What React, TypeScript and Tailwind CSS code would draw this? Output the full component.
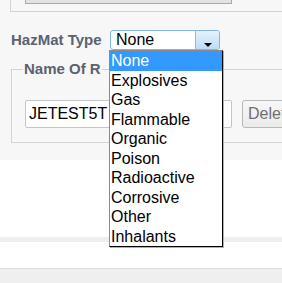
const hazmatTypes = [
  "None",
  "Explosives",
  "Gas",
  "Flammable",
  "Organic",
  "Poison",
  "Radioactive",
  "Corrosive",
  "Other",
  "Inhalants",
];

export default function App() {
  return (
    <div className="relative w-[282px] h-[283px] overflow-hidden bg-white font-['Liberation_Sans',Arial,sans-serif]">
      {/* Upper panel */}
      <div className="h-[160px] bg-[#f7f7f7]">
        <div className="ml-[10px] h-[12px] border-l border-b border-[#d3d3d3]">
          <div className="ml-[14px] w-[207px] h-[4px] bg-[#e2e2e2] border-x border-b border-[#a9a9a9]" />
        </div>

        {/* HazMat row */}
        <div className="mt-[18px] ml-[11px] flex items-center h-[20px]">
          <span className="w-[99px] text-[15px] font-bold leading-[18px] text-[#5b6270]">HazMat Type</span>
          <div className="flex w-[110px] h-[20px] border border-[#7eb4ea] rounded-[3px] bg-white">
            <span className="pl-[5px] text-[16px] leading-[18px] text-black">None</span>
            <div className="ml-auto w-[24px] h-full flex items-end justify-center pb-[2px] rounded-r-[2px] border-l border-[#8dbce9] bg-gradient-to-b from-[#e6f2fd] to-[#bcdcf6]">
              <div className="w-0 h-0 border-x-[4px] border-x-transparent border-t-[4px] border-t-black" />
            </div>
          </div>
        </div>

        {/* Name Of R... group (rest hidden under the open list) */}
        <fieldset className="mt-[10px] ml-[11px] w-[320px] border border-[#d3d3d3] pl-[13px] pb-[14px]">
          <legend className="-ml-[2px] px-[1px] text-[15px] font-bold leading-[18px] text-[#5b6270]">
            Name Of R
          </legend>
          <div className="mt-[22px] flex">
            <div className="w-[207px] h-[28px] border border-[#c5c5c5] rounded-[2px] bg-white pl-[3px] text-[16px] leading-[26px] text-black">
              JETEST5T
            </div>
            <button className="ml-[10px] h-[28px] px-[5px] border border-[#b8b8b8] rounded-[3px] bg-gradient-to-b from-[#f7f7f7] to-[#ebebeb] text-[16px] leading-[26px] text-[#6f6f6f]">
              Delete
            </button>
          </div>
        </fieldset>
      </div>

      <div className="h-[77px] bg-white" />
      <div className="h-[5px] bg-[#eeeeee]" />
      <div className="h-[26px] bg-white" />
      <div className="h-[15px] border-t border-[#dcdcdc] bg-[#efefef]" />

      {/* Open dropdown list */}
      <div className="absolute left-[109px] top-[50px] w-[114px] border border-[#8a8a8a] border-r-black border-b-black bg-white shadow-[1px_1px_0_#b0b0b0]">
        {hazmatTypes.map((t, i) => (
          <div
            key={t}
            className={
              i === 0
                ? "h-[19.5px] pl-[1px] text-[16px] leading-[19.5px] bg-[#3399ff] text-white"
                : "h-[19.5px] pl-[1px] text-[16px] leading-[19.5px] text-black"
            }
          >
            {t}
          </div>
        ))}
      </div>
    </div>
  );
}
